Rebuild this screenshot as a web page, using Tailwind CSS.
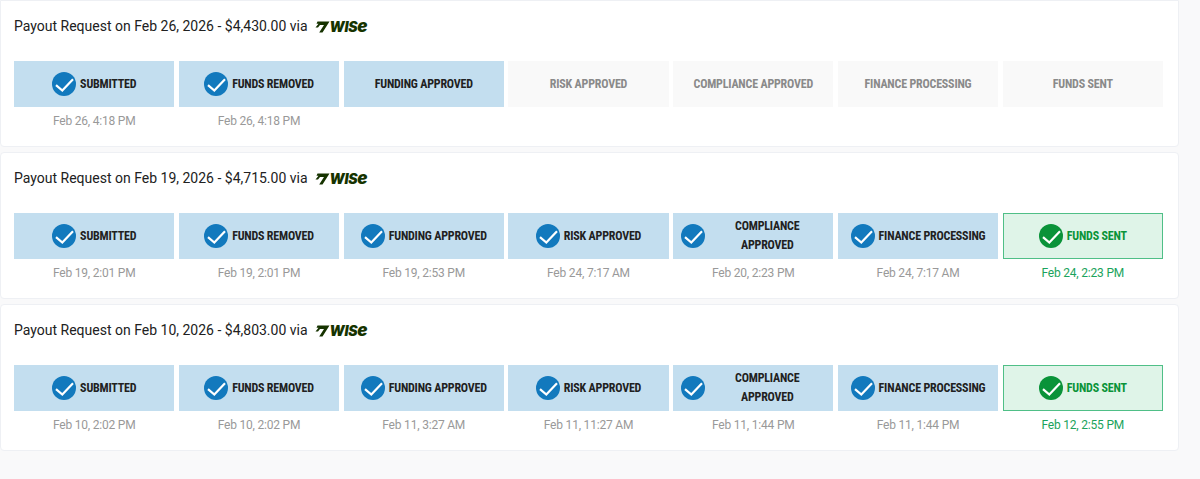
<!DOCTYPE html>
<html lang="en">
<head>
  <meta charset="UTF-8">
  <title>Payout Requests</title>
  <script src="https://cdn.jsdelivr.net/npm/@tailwindcss/browser@4"></script>
</head>
<body class="bg-[#f9f9fa] font-['Roboto',sans-serif] h-[479px] overflow-hidden">
  <svg class="hidden">
    <symbol id="check" viewBox="0 0 24 24">
      <circle cx="12" cy="12" r="12" fill="currentColor"/>
      <path d="M4 13.2l6.3 5.4L21 7.2" fill="none" stroke="#fff" stroke-width="2.2"/>
    </symbol>
    <symbol id="wise" viewBox="0 0 15 12">
      <path d="M2.5 0.5H14.5L7.5 11.5H4.2L9 4H5L3 6.5H0.5L3.5 2.8H1.5z" fill="#163300"/>
    </symbol>
  </svg>
  <div class="w-[1179px] flex flex-col gap-[5px]">

    <!-- Feb 26 -->
    <div class="bg-white border border-[#eef0f4] rounded-b h-[147px] pl-[13px] pr-[15px]">
      <div class="h-[60px] pb-[9px] flex items-center text-[14px] text-[#212121]">
        <span>Payout Request on Feb 26, 2026 - $4,430.00 via</span>
        <svg class="w-[15px] h-[12px] ml-[7px]"><use href="#wise"/></svg>
        <span class="text-[14px] font-['Inter'] font-black italic leading-none text-[#163300] tracking-[-0.3px]">WIS<span class="text-[17px]">e</span></span>
      </div>
      <div class="grid grid-cols-7 gap-[4.3px] text-[12px] text-center">
        <div>
          <div class="h-[46px] bg-[#c3deef] flex items-center justify-center gap-1 text-[#212121] font-bold">
            <svg class="w-6 h-6 text-[#1279bd]"><use href="#check"/></svg>
            <span class="font-stretch-[75%] tracking-[-0.2px]">SUBMITTED</span>
          </div>
          <div class="mt-[5px] text-[#999] tracking-[-0.2px]">Feb 26, 4:18 PM</div>
        </div>
        <div>
          <div class="h-[46px] bg-[#c3deef] flex items-center justify-center gap-1 text-[#212121] font-bold">
            <svg class="w-6 h-6 text-[#1279bd]"><use href="#check"/></svg>
            <span class="font-stretch-[75%] tracking-[-0.2px]">FUNDS REMOVED</span>
          </div>
          <div class="mt-[5px] text-[#999] tracking-[-0.2px]">Feb 26, 4:18 PM</div>
        </div>
        <div>
          <div class="h-[46px] bg-[#c3deef] flex items-center justify-center text-[#212121] font-bold">
            <span class="font-stretch-[75%] tracking-[-0.2px]">FUNDING APPROVED</span>
          </div>
        </div>
        <div><div class="h-[46px] bg-[#f9f9f9] flex items-center justify-center text-[#8a8a8a] font-bold"><span class="font-stretch-[75%] tracking-[-0.2px]">RISK APPROVED</span></div></div>
        <div><div class="h-[46px] bg-[#f9f9f9] flex items-center justify-center text-[#8a8a8a] font-bold"><span class="font-stretch-[75%] tracking-[-0.2px]">COMPLIANCE APPROVED</span></div></div>
        <div><div class="h-[46px] bg-[#f9f9f9] flex items-center justify-center text-[#8a8a8a] font-bold"><span class="font-stretch-[75%] tracking-[-0.2px]">FINANCE PROCESSING</span></div></div>
        <div><div class="h-[46px] bg-[#f9f9f9] flex items-center justify-center text-[#8a8a8a] font-bold"><span class="font-stretch-[75%] tracking-[-0.2px]">FUNDS SENT</span></div></div>
      </div>
    </div>

    <!-- Feb 19 -->
    <div class="bg-white border border-[#eef0f4] rounded h-[147px] pl-[13px] pr-[15px]">
      <div class="h-[60px] pb-[9px] flex items-center text-[14px] text-[#212121]">
        <span>Payout Request on Feb 19, 2026 - $4,715.00 via</span>
        <svg class="w-[15px] h-[12px] ml-[7px]"><use href="#wise"/></svg>
        <span class="text-[14px] font-['Inter'] font-black italic leading-none text-[#163300] tracking-[-0.3px]">WIS<span class="text-[17px]">e</span></span>
      </div>
      <div class="grid grid-cols-7 gap-[4.3px] text-[12px] text-center">
        <div>
          <div class="h-[46px] bg-[#c3deef] flex items-center justify-center gap-1 text-[#212121] font-bold">
            <svg class="w-6 h-6 text-[#1279bd]"><use href="#check"/></svg>
            <span class="font-stretch-[75%] tracking-[-0.2px]">SUBMITTED</span>
          </div>
          <div class="mt-[5px] text-[#999] tracking-[-0.2px]">Feb 19, 2:01 PM</div>
        </div>
        <div>
          <div class="h-[46px] bg-[#c3deef] flex items-center justify-center gap-1 text-[#212121] font-bold">
            <svg class="w-6 h-6 text-[#1279bd]"><use href="#check"/></svg>
            <span class="font-stretch-[75%] tracking-[-0.2px]">FUNDS REMOVED</span>
          </div>
          <div class="mt-[5px] text-[#999] tracking-[-0.2px]">Feb 19, 2:01 PM</div>
        </div>
        <div>
          <div class="h-[46px] bg-[#c3deef] flex items-center justify-center gap-1 text-[#212121] font-bold">
            <svg class="w-6 h-6 text-[#1279bd]"><use href="#check"/></svg>
            <span class="font-stretch-[75%] tracking-[-0.2px]">FUNDING APPROVED</span>
          </div>
          <div class="mt-[5px] text-[#999] tracking-[-0.2px]">Feb 19, 2:53 PM</div>
        </div>
        <div>
          <div class="h-[46px] bg-[#c3deef] flex items-center justify-center gap-1 text-[#212121] font-bold">
            <svg class="w-6 h-6 text-[#1279bd]"><use href="#check"/></svg>
            <span class="font-stretch-[75%] tracking-[-0.2px]">RISK APPROVED</span>
          </div>
          <div class="mt-[5px] text-[#999] tracking-[-0.2px]">Feb 24, 7:17 AM</div>
        </div>
        <div>
          <div class="h-[46px] bg-[#c3deef] flex items-center px-2 gap-1 text-[#212121] font-bold">
            <svg class="w-6 h-6 shrink-0 text-[#1279bd]"><use href="#check"/></svg>
            <span class="flex-1 font-stretch-[75%] tracking-[-0.2px] leading-[19px]">COMPLIANCE<br>APPROVED</span>
          </div>
          <div class="mt-[5px] text-[#999] tracking-[-0.2px]">Feb 20, 2:23 PM</div>
        </div>
        <div>
          <div class="h-[46px] bg-[#c3deef] flex items-center justify-center gap-1 text-[#212121] font-bold">
            <svg class="w-6 h-6 text-[#1279bd]"><use href="#check"/></svg>
            <span class="font-stretch-[75%] tracking-[-0.2px]">FINANCE PROCESSING</span>
          </div>
          <div class="mt-[5px] text-[#999] tracking-[-0.2px]">Feb 24, 7:17 AM</div>
        </div>
        <div>
          <div class="h-[46px] bg-[#dff4e8] border border-[#4fbf87] flex items-center justify-center gap-1 text-[#0a9339] font-bold">
            <svg class="w-6 h-6 text-[#0a9339]"><use href="#check"/></svg>
            <span class="font-stretch-[75%] tracking-[-0.2px]">FUNDS SENT</span>
          </div>
          <div class="mt-[5px] text-[#1ba35c] tracking-[-0.2px]">Feb 24, 2:23 PM</div>
        </div>
      </div>
    </div>

    <!-- Feb 10 -->
    <div class="bg-white border border-[#eef0f4] rounded h-[147px] pl-[13px] pr-[15px]">
      <div class="h-[60px] pb-[9px] flex items-center text-[14px] text-[#212121]">
        <span>Payout Request on Feb 10, 2026 - $4,803.00 via</span>
        <svg class="w-[15px] h-[12px] ml-[7px]"><use href="#wise"/></svg>
        <span class="text-[14px] font-['Inter'] font-black italic leading-none text-[#163300] tracking-[-0.3px]">WIS<span class="text-[17px]">e</span></span>
      </div>
      <div class="grid grid-cols-7 gap-[4.3px] text-[12px] text-center">
        <div>
          <div class="h-[46px] bg-[#c3deef] flex items-center justify-center gap-1 text-[#212121] font-bold">
            <svg class="w-6 h-6 text-[#1279bd]"><use href="#check"/></svg>
            <span class="font-stretch-[75%] tracking-[-0.2px]">SUBMITTED</span>
          </div>
          <div class="mt-[5px] text-[#999] tracking-[-0.2px]">Feb 10, 2:02 PM</div>
        </div>
        <div>
          <div class="h-[46px] bg-[#c3deef] flex items-center justify-center gap-1 text-[#212121] font-bold">
            <svg class="w-6 h-6 text-[#1279bd]"><use href="#check"/></svg>
            <span class="font-stretch-[75%] tracking-[-0.2px]">FUNDS REMOVED</span>
          </div>
          <div class="mt-[5px] text-[#999] tracking-[-0.2px]">Feb 10, 2:02 PM</div>
        </div>
        <div>
          <div class="h-[46px] bg-[#c3deef] flex items-center justify-center gap-1 text-[#212121] font-bold">
            <svg class="w-6 h-6 text-[#1279bd]"><use href="#check"/></svg>
            <span class="font-stretch-[75%] tracking-[-0.2px]">FUNDING APPROVED</span>
          </div>
          <div class="mt-[5px] text-[#999] tracking-[-0.2px]">Feb 11, 3:27 AM</div>
        </div>
        <div>
          <div class="h-[46px] bg-[#c3deef] flex items-center justify-center gap-1 text-[#212121] font-bold">
            <svg class="w-6 h-6 text-[#1279bd]"><use href="#check"/></svg>
            <span class="font-stretch-[75%] tracking-[-0.2px]">RISK APPROVED</span>
          </div>
          <div class="mt-[5px] text-[#999] tracking-[-0.2px]">Feb 11, 11:27 AM</div>
        </div>
        <div>
          <div class="h-[46px] bg-[#c3deef] flex items-center px-2 gap-1 text-[#212121] font-bold">
            <svg class="w-6 h-6 shrink-0 text-[#1279bd]"><use href="#check"/></svg>
            <span class="flex-1 font-stretch-[75%] tracking-[-0.2px] leading-[19px]">COMPLIANCE<br>APPROVED</span>
          </div>
          <div class="mt-[5px] text-[#999] tracking-[-0.2px]">Feb 11, 1:44 PM</div>
        </div>
        <div>
          <div class="h-[46px] bg-[#c3deef] flex items-center justify-center gap-1 text-[#212121] font-bold">
            <svg class="w-6 h-6 text-[#1279bd]"><use href="#check"/></svg>
            <span class="font-stretch-[75%] tracking-[-0.2px]">FINANCE PROCESSING</span>
          </div>
          <div class="mt-[5px] text-[#999] tracking-[-0.2px]">Feb 11, 1:44 PM</div>
        </div>
        <div>
          <div class="h-[46px] bg-[#dff4e8] border border-[#4fbf87] flex items-center justify-center gap-1 text-[#0a9339] font-bold">
            <svg class="w-6 h-6 text-[#0a9339]"><use href="#check"/></svg>
            <span class="font-stretch-[75%] tracking-[-0.2px]">FUNDS SENT</span>
          </div>
          <div class="mt-[5px] text-[#1ba35c] tracking-[-0.2px]">Feb 12, 2:55 PM</div>
        </div>
      </div>
    </div>

  </div>
</body>
</html>
